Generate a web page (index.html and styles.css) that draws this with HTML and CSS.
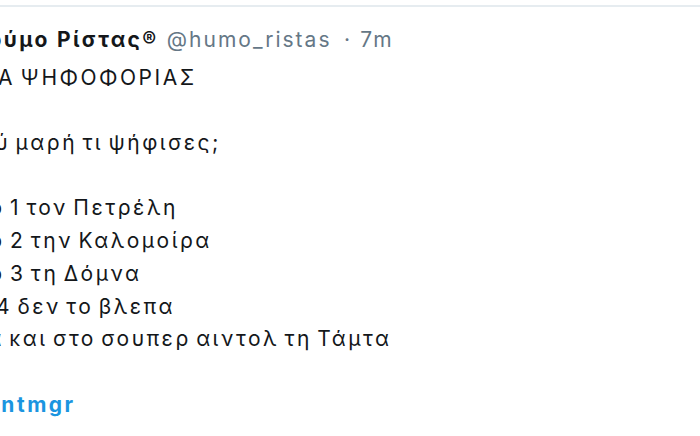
FILE: index.html
```html
<!DOCTYPE html>
<html lang="el">
<head>
    <meta charset="UTF-8">
    <meta name="viewport" content="width=device-width, initial-scale=1.0">
    <title>Tweet</title>
    <link rel="stylesheet" href="styles.css">
</head>
<body>
    <article class="tweet">
        <div class="tweet-body">
            <div class="tweet-header">
                <span class="name">Χιούμο Ρίστας®</span>
                <span class="handle">@humo_ristas</span>
                <span class="dot">·</span>
                <span class="time">7m</span>
            </div>
            <div class="tweet-text">
                <p class="line title">ΩΡΑ ΨΗΦΟΦΟΡΙΑΣ</p>
                <p class="line blank"></p>
                <p class="line">Πού μαρή τι ψήφισες;</p>
                <p class="line blank"></p>
                <p class="line">Στο 1 τον Πετρέλη</p>
                <p class="line">Στο 2 την Καλομοίρα</p>
                <p class="line">Στο 3 τη Δόμνα</p>
                <p class="line four">Στο 4 δεν το βλεπα</p>
                <p class="line last">Μα και στο σουπερ αιντολ τη Τάμτα</p>
                <p class="line blank"></p>
                <p class="line tags"><a class="hashtag" href="#">#eurovisiontmgr</a></p>
            </div>
        </div>
    </article>
</body>
</html>
```

FILE: styles.css
```css
* {
    margin: 0;
    padding: 0;
    box-sizing: border-box;
}

body {
    font-family: Inter, 'Noto Sans', sans-serif;
    color: #14171a;
    background-color: #fff;
    overflow: hidden;
}

.tweet {
    margin-top: 5px;
    border-top: 2px solid #e6ecf0;
    padding-top: 17px;
}

/* the shot is cropped on the left, so the column starts off screen */
.tweet-body {
    margin-left: -38px;
    font-size: 21px;
    line-height: 32.7px;
    letter-spacing: 2.5px;
    word-spacing: -3px;
    white-space: nowrap;
}

.tweet-header {
    margin-bottom: 5px;
    word-spacing: 0;
}

.name {
    font-weight: bold;
    letter-spacing: 2.3px;
}

.handle,
.dot,
.time {
    color: #657786;
    letter-spacing: 2px;
}

.dot {
    margin-left: 4px;
}

.line.blank {
    height: 32.7px;
}

.line.title {
    margin-left: 3px;
}

.line.four {
    margin-left: -14px;
}

.line.last {
    margin-left: 4px;
}

.line.tags {
    margin-left: -94px;
}

.hashtag {
    color: #1b95e0;
    font-weight: bold;
    text-decoration: none;
}
```
